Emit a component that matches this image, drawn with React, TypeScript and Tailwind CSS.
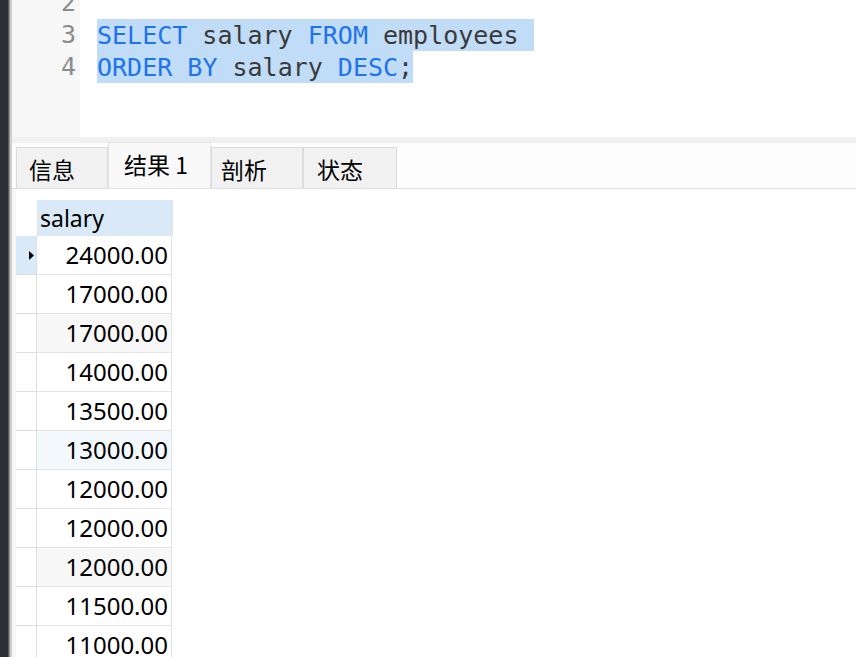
import React from 'react';

const rows: { value: string; bg: string }[] = [
  { value: '24000.00', bg: 'bg-white' },
  { value: '17000.00', bg: 'bg-white' },
  { value: '17000.00', bg: 'bg-[#f7f7f7]' },
  { value: '14000.00', bg: 'bg-white' },
  { value: '13500.00', bg: 'bg-white' },
  { value: '13000.00', bg: 'bg-[#f3f8fd]' },
  { value: '12000.00', bg: 'bg-white' },
  { value: '12000.00', bg: 'bg-white' },
  { value: '12000.00', bg: 'bg-[#f7f7f7]' },
  { value: '11500.00', bg: 'bg-white' },
  { value: '11000.00', bg: 'bg-white' },
];

const tabs = [
  { label: '信息', w: 'w-[92px]', pl: 'pl-[12px]', active: false },
  { label: '结果 1', w: 'w-[103px]', pl: 'pl-[15px]', active: true },
  { label: '剖析', w: 'w-[92px]', pl: 'pl-[9px]', active: false },
  { label: '状态', w: 'w-[94px]', pl: 'pl-[13px]', active: false },
];

const Kw: React.FC<{ children: React.ReactNode }> = ({ children }) => (
  <span className="text-[#1f74ee]">{children}</span>
);

const App: React.FC = () => {
  return (
    <div className="w-[856px] h-[657px] flex overflow-hidden bg-white">
      {/* window edge */}
      <div className="w-[8px] shrink-0 bg-[#2b2e32]" />
      <div className="w-[1px] shrink-0 bg-[#5c5e60]" />
      <div className="w-[1px] shrink-0 bg-[#8e8e8e]" />
      <div className="w-[2px] shrink-0 bg-[#cfcfcf]" />

      <div className="flex-1 flex flex-col min-w-0">
        {/* editor */}
        <div className="h-[137px] shrink-0 flex overflow-hidden font-['DejaVu_Sans_Mono',monospace] text-[25px]">
          <div className="w-[68px] bg-[#f7f7f7] text-[#8c8c8c] text-right pr-[4px]">
            <div className="-mt-[13px]">
              <div className="h-[32px] leading-[32px]">2</div>
              <div className="h-[32px] leading-[32px]">3</div>
              <div className="h-[32px] leading-[32px]">4</div>
            </div>
          </div>
          <div className="flex-1 pl-[17px] text-[#3a3a3a] whitespace-pre">
            <div className="-mt-[15px]">
              <div className="h-[32px]" />
              <div className="h-[32px]">
                <span className="bg-[#c0dcf7] inline-block h-[32px] leading-[34px]">
                  <Kw>SELECT</Kw> salary <Kw>FROM</Kw> employees{' '}
                </span>
              </div>
              <div className="h-[32px]">
                <span className="bg-[#c0dcf7] inline-block h-[32px] leading-[34px]">
                  <Kw>ORDER</Kw> <Kw>BY</Kw> salary <Kw>DESC</Kw>;
                </span>
              </div>
            </div>
          </div>
        </div>

        {/* splitter band */}
        <div className="h-[6px] shrink-0 bg-[#f0f0f0]" />

        {/* tabs */}
        <div className="h-[46px] shrink-0 bg-[#fdfdfd] pl-[4px] flex items-end border-b border-[#e0e0e0] font-['Noto_Sans_CJK_SC',sans-serif] text-[23px] text-black">
          {tabs.map(t => (
            <div
              key={t.label}
              className={`${t.w} ${t.pl} shrink-0 flex items-center border border-b-0 ${
                t.active
                  ? 'h-[46px] bg-[#f9f9f9] border-[#e2e2e2] pb-[2px]'
                  : 'h-[41px] bg-[#f1f1f1] border-[#dcdcdc] pt-[2px]'
              }`}
            >
              {t.label}
            </div>
          ))}
        </div>

        {/* result grid */}
        <div className="flex-1 min-h-0 overflow-hidden flex bg-white">
          <div className="w-[4px] bg-[#f7f7f7]" />
          <div className="pt-[11px] font-['Noto_Sans',sans-serif] text-[24px] text-black">
            <div className="flex h-[36px]">
              <div className="w-[21px]" />
              <div className="w-[136px] bg-[#d9e9f7] border-r border-[#e4e4e4] pl-[3px] leading-[36px] text-[23px]">
                salary
              </div>
            </div>
            {rows.map((r, i) => (
              <div key={i} className="flex h-[39px]">
                <div
                  className={`w-[21px] border-b border-r border-[#dedede] flex items-center ${
                    i === 0 ? 'bg-[#d9e9f7]' : 'bg-white'
                  }`}
                >
                  {i === 0 && (
                    <svg width="7" height="11" viewBox="0 0 7 11" className="ml-[12px]">
                      <path d="M1 1 L6 5.5 L1 10 Z" fill="#000" />
                    </svg>
                  )}
                </div>
                <div
                  className={`w-[135px] ${r.bg} border-b border-r border-[#e4e4e4] text-right pr-[3px] leading-[37px]`}
                >
                  {r.value}
                </div>
              </div>
            ))}
          </div>
          <div className="flex-1" />
        </div>
      </div>
    </div>
  );
};

export default App;
